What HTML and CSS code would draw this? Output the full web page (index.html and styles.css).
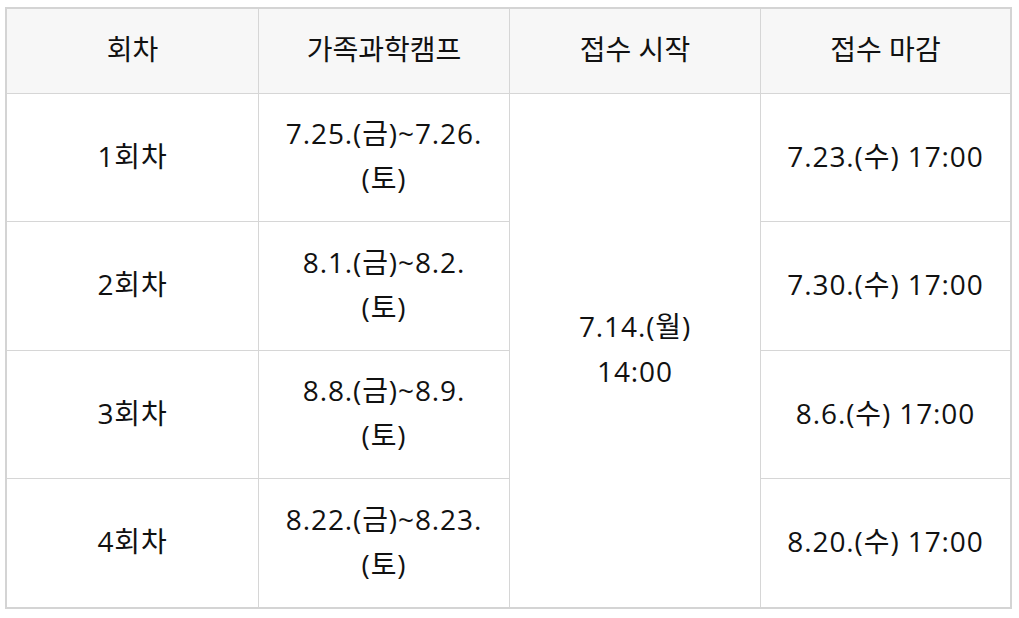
FILE: index.html
```html
<!DOCTYPE html>
<html lang="ko">
<head>
<meta charset="utf-8">
<link rel="stylesheet" href="styles.css">
</head>
<body>
<div class="wrap">
<table class="sched">
  <colgroup>
    <col class="c1"><col class="c2"><col class="c3"><col class="c4">
  </colgroup>
  <thead>
    <tr><th>회차</th><th>가족과학캠프</th><th>접수 시작</th><th class="last">접수 마감</th></tr>
  </thead>
  <tbody>
    <tr class="r-a"><td>1회차</td><td>7.25.(금)~7.26.<br>(토)</td><td rowspan="4" class="start">7.14.(월)<br>14:00</td><td class="last">7.23.(수) 17:00</td></tr>
    <tr class="r-b"><td>2회차</td><td>8.1.(금)~8.2.<br>(토)</td><td class="last">7.30.(수) 17:00</td></tr>
    <tr class="r-a"><td>3회차</td><td>8.8.(금)~8.9.<br>(토)</td><td class="last">8.6.(수) 17:00</td></tr>
    <tr class="end"><td>4회차</td><td>8.22.(금)~8.23.<br>(토)</td><td class="last">8.20.(수) 17:00</td></tr>
  </tbody>
</table>
</div>
</body>
</html>
```

FILE: styles.css
```css
html, body { margin: 0; padding: 0; background: #fff; }
.wrap { padding: 7px 0 0 5px; }
.sched {
  border-collapse: separate;
  border-spacing: 0;
  table-layout: fixed;
  width: 1007px;
  border: 2px solid #d4d4d4;
  font-family: "Open Sans", "Noto Sans CJK KR", sans-serif;
  font-size: 28px;
  letter-spacing: 0.9px;
  color: #111;
}
.c1 { width: 252px; }
.c2 { width: 251px; }
.c3 { width: 251px; }
.c4 { width: 249px; }
.sched th, .sched td {
  box-sizing: border-box;
  border-right: 1px solid #d6d6d6;
  border-bottom: 1px solid #d6d6d6;
  text-align: center;
  vertical-align: middle;
  font-weight: normal;
  padding: 0 10px 3px;
  line-height: 45px;
}
.sched th { background: #f7f7f7; height: 85px; letter-spacing: 0; }
.sched tr.r-a td { height: 128px; }
.sched tr.r-b td { height: 129px; }
.sched .last { border-right: none; }
.sched .start { border-bottom: none; }
.sched tr.end td { border-bottom: none; height: 128px; }
```
